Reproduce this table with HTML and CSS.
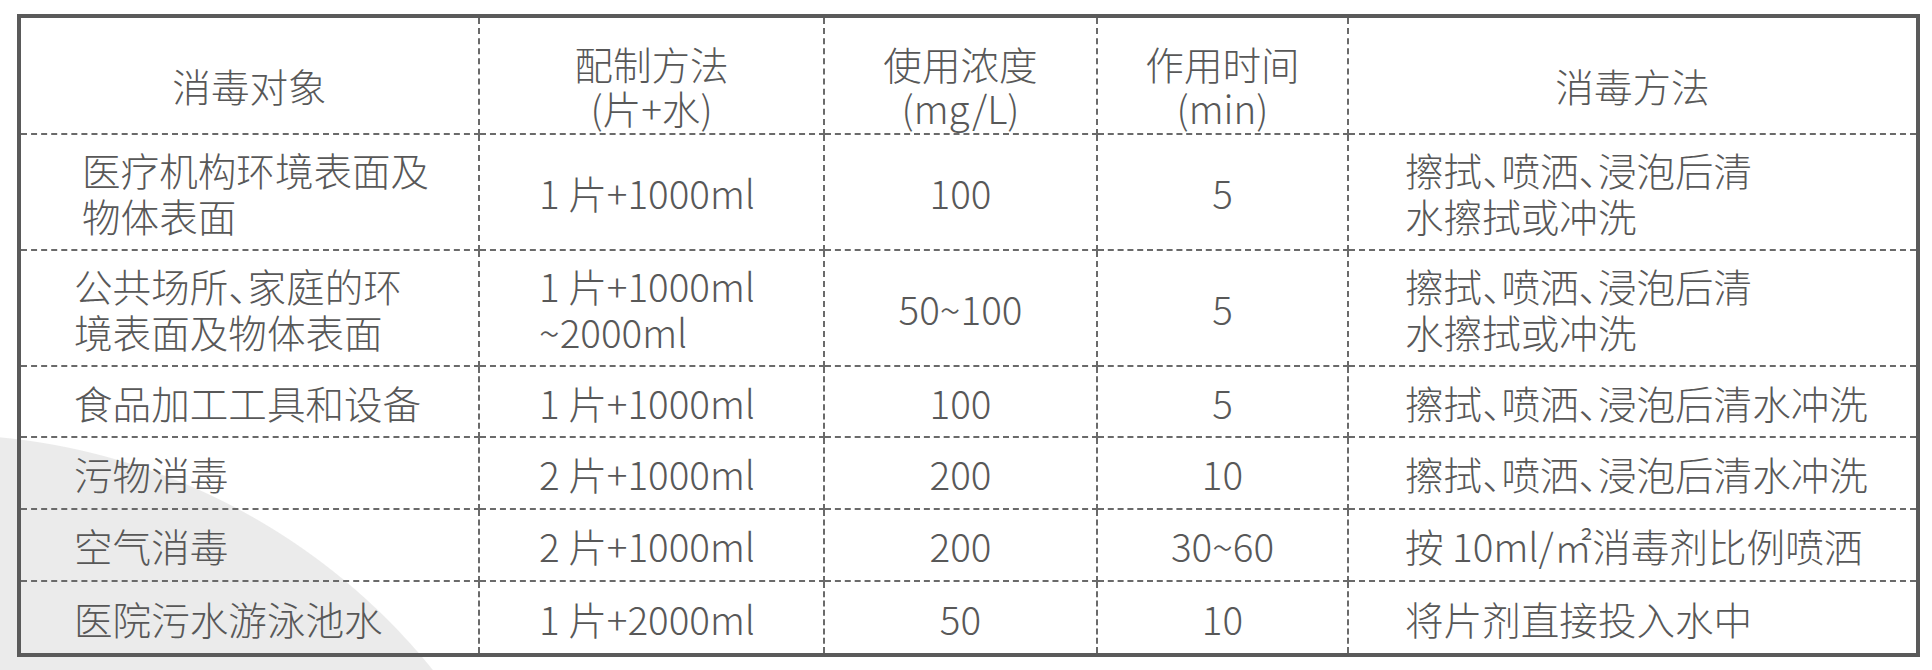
FILE: index.html
```html
<!DOCTYPE html>
<html lang="zh-CN">
<head>
<meta charset="utf-8">
<title>消毒方法</title>
<link rel="stylesheet" href="styles.css">
</head>
<body>
<div class="table">
  <div class="cell head"><div class="t">消毒对象</div></div>
  <div class="cell head"><div class="t">配制方法<br>(片+水)</div></div>
  <div class="cell head"><div class="t">使用浓度<br>(mg/L)</div></div>
  <div class="cell head"><div class="t">作用时间<br>(min)</div></div>
  <div class="cell head last"><div class="t">消毒方法</div></div>

  <div class="cell c1 indent"><div class="t">医疗机构环境表面及<br>物体表面</div></div>
  <div class="cell c2"><div class="t">1 片+1000ml</div></div>
  <div class="cell center"><div class="t">100</div></div>
  <div class="cell center"><div class="t">5</div></div>
  <div class="cell c5 last"><div class="t">擦拭<span class="p">、</span>喷洒<span class="p">、</span>浸泡后清<br>水擦拭或冲洗</div></div>

  <div class="cell c1"><div class="t">公共场所<span class="p">、</span>家庭的环<br>境表面及物体表面</div></div>
  <div class="cell c2"><div class="t">1 片+1000ml<br>~2000ml</div></div>
  <div class="cell center"><div class="t">50~100</div></div>
  <div class="cell center"><div class="t">5</div></div>
  <div class="cell c5 last"><div class="t">擦拭<span class="p">、</span>喷洒<span class="p">、</span>浸泡后清<br>水擦拭或冲洗</div></div>

  <div class="cell c1"><div class="t">食品加工工具和设备</div></div>
  <div class="cell c2"><div class="t">1 片+1000ml</div></div>
  <div class="cell center"><div class="t">100</div></div>
  <div class="cell center"><div class="t">5</div></div>
  <div class="cell c5 last"><div class="t">擦拭<span class="p">、</span>喷洒<span class="p">、</span>浸泡后清水冲洗</div></div>

  <div class="cell c1"><div class="t">污物消毒</div></div>
  <div class="cell c2"><div class="t">2 片+1000ml</div></div>
  <div class="cell center"><div class="t">200</div></div>
  <div class="cell center"><div class="t">10</div></div>
  <div class="cell c5 last"><div class="t">擦拭<span class="p">、</span>喷洒<span class="p">、</span>浸泡后清水冲洗</div></div>

  <div class="cell c1"><div class="t">空气消毒</div></div>
  <div class="cell c2"><div class="t">2 片+1000ml</div></div>
  <div class="cell center"><div class="t">200</div></div>
  <div class="cell center"><div class="t">30~60</div></div>
  <div class="cell c5 last"><div class="t">按 10ml/㎡消毒剂比例喷洒</div></div>

  <div class="cell c1 bottom"><div class="t">医院污水游泳池水</div></div>
  <div class="cell c2 bottom"><div class="t">1 片+2000ml</div></div>
  <div class="cell center bottom"><div class="t">50</div></div>
  <div class="cell center bottom"><div class="t">10</div></div>
  <div class="cell c5 last bottom"><div class="t">将片剂直接投入水中</div></div>
</div>
</body>
</html>
```

FILE: styles.css
```css
html, body {
  margin: 0;
  padding: 0;
  overflow: hidden;
}
body {
  width: 1932px;
  height: 670px;
  padding: 14px 0 0 17px;
  box-sizing: border-box;
  font-family: "Noto Sans CJK SC", "Noto Sans", sans-serif;
  font-weight: 300;
  color: #585858;
  background-color: #ffffff;
  background-image: radial-gradient(circle 634px at -60px 1068px, #ebebeb 633px, rgba(255, 255, 255, 0) 634px);
  background-repeat: no-repeat;
}
.table {
  width: 1903px;
  height: 643px;
  box-sizing: border-box;
  border: 4px solid #5a5a5a;
  display: grid;
  grid-template-columns: 459px 345px 273px 251px 567px;
  grid-template-rows: 117px 116px 116px 71px 72px 72px 71px;
}
.cell {
  box-sizing: border-box;
  border-right: 2px dashed #6a6a6a;
  border-bottom: 2px dashed #6a6a6a;
  display: flex;
  align-items: center;
  font-size: 38.6px;
  line-height: 46px;
  white-space: nowrap;
}
.cell.last { border-right: none; }
.cell.bottom { border-bottom: none; }
.head {
  justify-content: center;
  text-align: center;
  padding-top: 19px;
  line-height: 44px;
}
.center {
  justify-content: center;
  text-align: center;
}
.c1 { padding-left: 53px; }
.c1.indent { padding-left: 61px; }
.c2 { padding-left: 59px; }
.c5 { padding-left: 56px; }
.p { letter-spacing: -0.5em; }
```
